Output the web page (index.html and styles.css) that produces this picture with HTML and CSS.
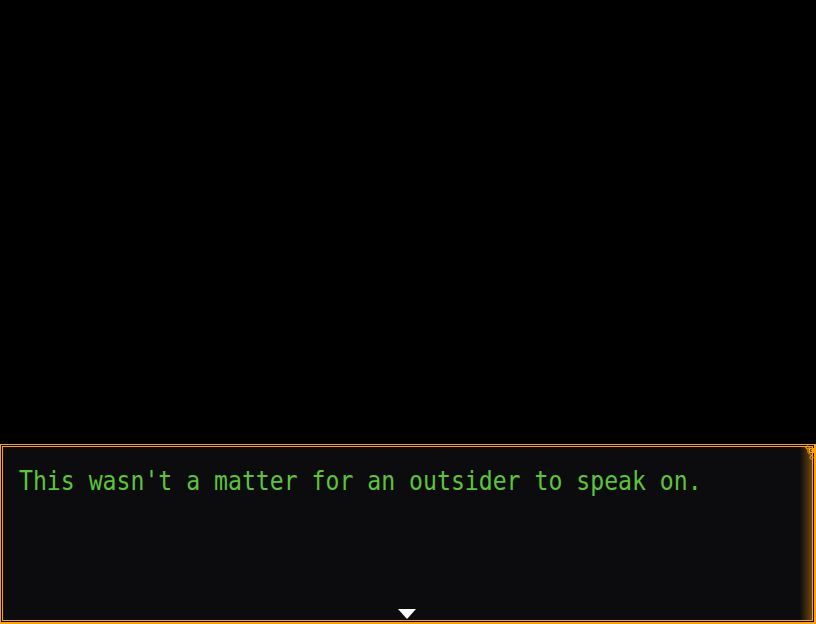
FILE: index.html
```html
<!DOCTYPE html>
<html>
<head>
<meta charset="utf-8">
<link rel="stylesheet" href="styles.css">
</head>
<body>
<div class="scene">
  <div class="stage"></div>
  <div class="msgbox">
    <div class="inner">
      <p class="line">This wasn't a matter for an outsider to speak on.</p>
      <div class="shade"></div>
      <div class="cursor"></div>
    </div>
    <svg class="ornament" width="18" height="18" viewBox="0 0 18 18">
      <path d="M0 1.5 H9 L12 4.5 V7.5 L15 10.5 H16.5" fill="none" stroke="#ffa200" stroke-width="1"/>
      <circle cx="11.5" cy="2.5" r="1.6" fill="none" stroke="#ffa200" stroke-width="1"/>
      <rect x="13.5" y="3.5" width="4" height="4" fill="none" stroke="#ffa200" stroke-width="1"/>
      <rect x="15" y="5" width="1" height="1" fill="#ffa200"/>
      <circle cx="15.5" cy="12.5" r="1.6" fill="none" stroke="#ffa200" stroke-width="1"/>
    </svg>
  </div>
</div>
</body>
</html>
```
FILE: styles.css
```css
html, body {
  margin: 0;
  padding: 0;
  background: #000;
  width: 816px;
  height: 624px;
  overflow: hidden;
}
.scene {
  display: flex;
  flex-direction: column;
  width: 816px;
  height: 624px;
}
.stage {
  height: 444px;
  background: #000;
}
.msgbox {
  position: relative;
  flex: 1;
  box-sizing: border-box;
  border: 1px solid #ffa200;
  border-right-width: 2px;
  border-bottom-width: 2px;
  padding: 1px;
  background: #000;
  display: flex;
}
.inner {
  position: relative;
  flex: 1;
  border: 1px solid #ffa200;
  background: #0c0c0f;
  padding: 21px 0 0 16px;
}
.line {
  margin: 0;
  font-family: "DejaVu Sans Mono", monospace;
  font-size: 23.15px;
  line-height: 28px;
  color: #5cc43c;
  transform: scaleY(1.13);
  transform-origin: 0 22px;
}
.shade {
  position: absolute;
  top: 0;
  right: 0;
  bottom: 0;
  width: 12px;
  background: linear-gradient(to right, rgba(255,162,0,0), rgba(255,162,0,0.4));
}
.cursor {
  position: absolute;
  left: 395px;
  bottom: 1px;
  width: 0;
  height: 0;
  border-left: 9px solid transparent;
  border-right: 9px solid transparent;
  border-top: 10px solid #ffffff;
}
.ornament {
  position: absolute;
  top: 0;
  right: 0;
}
```
